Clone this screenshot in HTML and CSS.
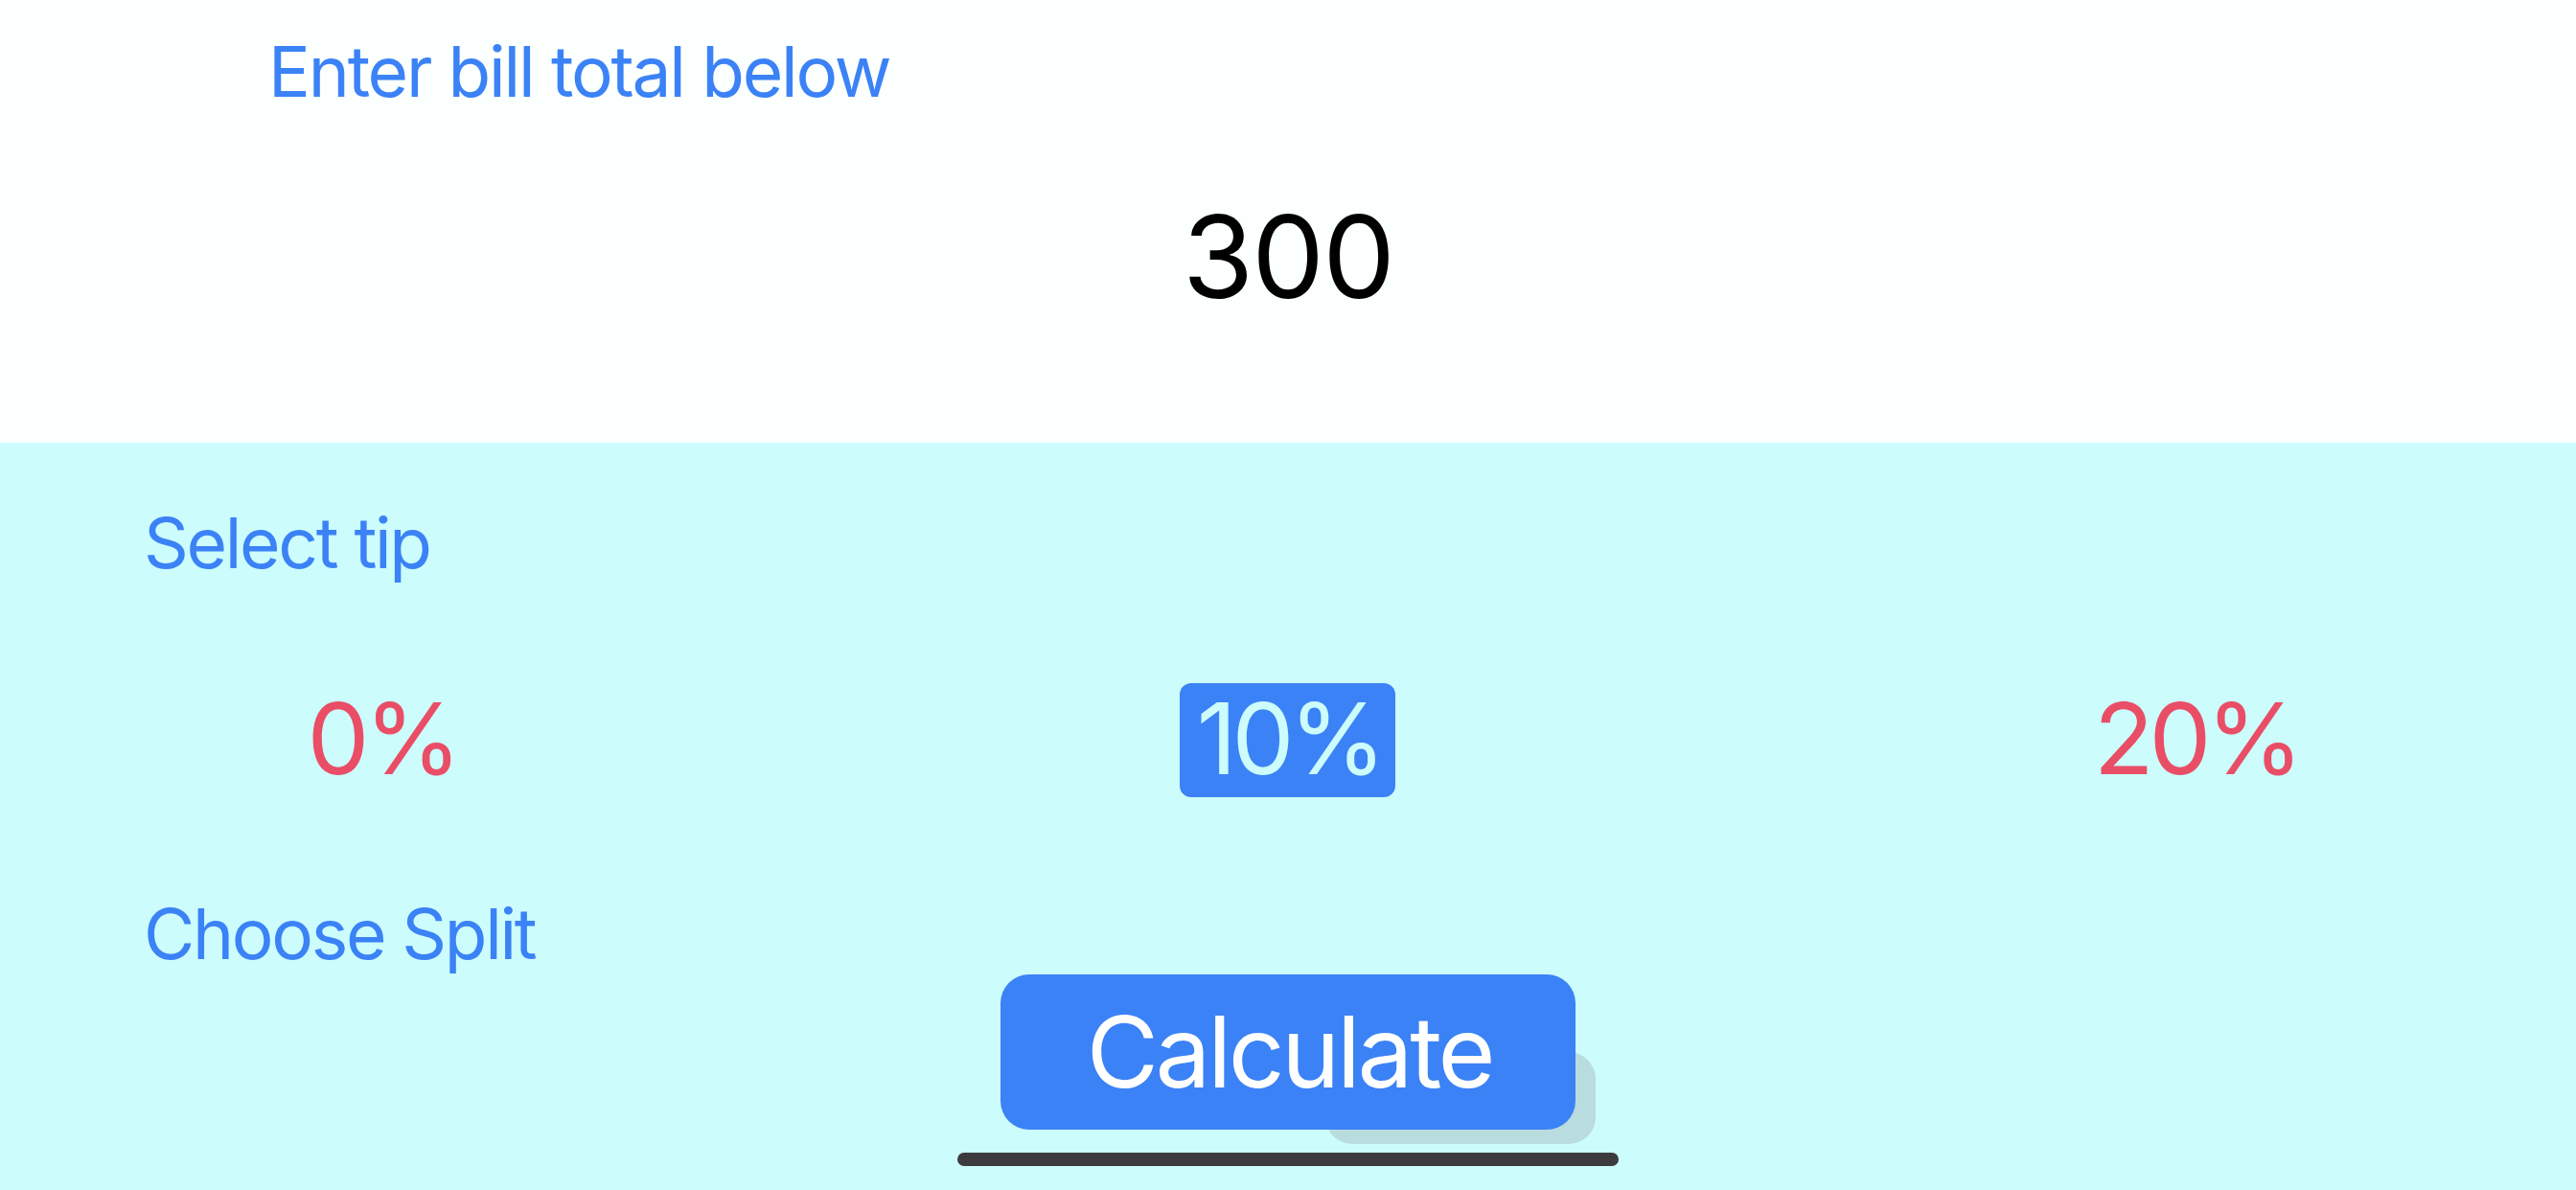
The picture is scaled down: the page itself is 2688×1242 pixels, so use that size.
FILE: index.html
```html
<!DOCTYPE html>
<html lang="en">
<head>
<meta charset="utf-8">
<title>Tip Calculator</title>
<link rel="stylesheet" href="styles.css">
</head>
<body>
<div class="app">
  <section class="bill">
    <div class="bill-label">Enter bill total below</div>
    <div class="bill-amount">300</div>
  </section>
  <section class="settings">
    <div class="section-label">Select tip</div>
    <div class="tip-row">
      <div class="tip">0%</div>
      <div class="tip tip-selected">10%</div>
      <div class="tip">20%</div>
    </div>
    <div class="section-label split-label">Choose Split</div>
    <div class="calc-wrap">
      <div class="calc-shadow"></div>
      <button class="calc-btn">Calculate</button>
    </div>
    <div class="home-indicator"></div>
  </section>
</div>
</body>
</html>
```

FILE: styles.css
```css
html, body {
  margin: 0;
  padding: 0;
}
body {
  width: 2688px;
  height: 1242px;
  overflow: hidden;
  font-family: Inter, "Noto Sans", sans-serif;
}
.app {
  display: flex;
  flex-direction: column;
  height: 1242px;
}
.bill {
  height: 462px;
  background: #fbfffe;
  box-sizing: border-box;
  padding-top: 38px;
}
.bill-label {
  margin-left: 280px;
  font-size: 73px;
  line-height: 73px;
  height: 73px;
  letter-spacing: -0.03em;
  color: #3b82f6;
  white-space: nowrap;
}
.bill-amount {
  margin-top: 97px;
  text-align: center;
  font-size: 120px;
  line-height: 120px;
  letter-spacing: -0.015em;
  color: #000;
}
.settings {
  flex: 1;
  background: #ccfcfc;
  box-sizing: border-box;
  padding-top: 68px;
  display: flex;
  flex-direction: column;
}
.section-label {
  margin-left: 150px;
  font-size: 73px;
  line-height: 73px;
  height: 73px;
  letter-spacing: -0.032em;
  color: #3b82f6;
  white-space: nowrap;
}
.tip-row {
  margin-top: 110px;
  display: flex;
  justify-content: space-between;
  padding: 0 286px 0 284px;
}
.tip {
  width: 225px;
  height: 119px;
  box-sizing: border-box;
  padding-bottom: 4px;
  padding-left: 4px;
  line-height: 115px;
  font-size: 103px;
  letter-spacing: -0.05em;
  text-align: center;
  color: #e94e66;
  border-radius: 12px;
  white-space: nowrap;
}
.tip-selected {
  background: #3b82f6;
  color: #ccfcfc;
}
.split-label {
  margin-top: 106px;
}
.calc-wrap {
  position: relative;
  margin: 6px auto 0;
  width: 600px;
  height: 162px;
}
.calc-shadow {
  position: absolute;
  left: 339px;
  top: 81px;
  width: 282px;
  height: 96px;
  background: #b9dcdf;
  border-radius: 28px;
}
.calc-btn {
  position: relative;
  display: block;
  width: 600px;
  height: 162px;
  margin: 0;
  padding: 0 0 0 3px;
  border: none;
  border-radius: 30px;
  background: #3b82f6;
  color: #ffffff;
  font-family: Inter, "Noto Sans", sans-serif;
  font-size: 103px;
  line-height: 162px;
  letter-spacing: -0.032em;
  text-align: center;
  cursor: pointer;
}
.home-indicator {
  margin: 24px auto 0;
  width: 690px;
  height: 14px;
  border-radius: 7px;
  background: #3c3c3e;
}
```
